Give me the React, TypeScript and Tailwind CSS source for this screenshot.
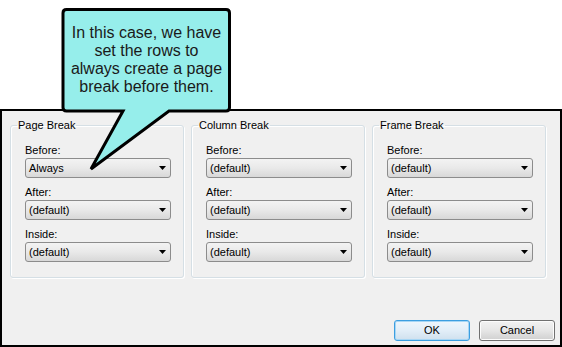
const FONT = { fontFamily: '"Liberation Sans", Arial, sans-serif' };

const GROUPS = [
  { title: "Page Break", values: ["Always", "(default)", "(default)"] },
  { title: "Column Break", values: ["(default)", "(default)", "(default)"] },
  { title: "Frame Break", values: ["(default)", "(default)", "(default)"] },
];

const LABELS = ["Before:", "After:", "Inside:"];

function Combo({ value }: { value: string }) {
  return (
    <div className="mt-[1px] flex h-[20px] items-center justify-between rounded-[3px] border border-[#8c8c8c] bg-gradient-to-b from-[#f3f3f3] via-[#e9e9e9] to-[#d8d8d8] pl-[3px] pr-[4px] text-[11px] leading-none text-black">
      <span>{value}</span>
      <svg width="7" height="4" viewBox="0 0 7 4">
        <path d="M0 0 H7 L3.5 4 Z" fill="#000" />
      </svg>
    </div>
  );
}

function Group({ title, values }: { title: string; values: string[] }) {
  return (
    <fieldset className="w-[174px] rounded-[3px] border border-[#d5dfe5] p-0 shadow-[inset_1px_1px_0_#fff,1px_1px_0_#fff]">
      <legend className="ml-[6px] px-[1px] text-[11px] leading-[14px] text-black">{title}</legend>
      <div className="pl-[14px] pr-[12px] pt-[11px] pb-[15px]">
        {LABELS.map((label, i) => (
          <div key={label} className={i > 0 ? "mt-[7px]" : ""}>
            <div className="h-[14px] text-[11px] leading-[14px] text-black">{label}</div>
            <Combo value={values[i]} />
          </div>
        ))}
      </div>
    </fieldset>
  );
}

function Button({ label, focused }: { label: string; focused?: boolean }) {
  return (
    <div
      className={
        focused
          ? "flex h-[21px] w-[76px] items-center justify-center rounded-[3px] border border-[#3c9ee0] bg-gradient-to-b from-[#eef6fc] via-[#e2eef8] to-[#cfe0ee] text-[11px] text-black shadow-[inset_0_0_0_1px_#a6d6f5]"
          : "flex h-[21px] w-[76px] items-center justify-center rounded-[3px] border border-[#707070] bg-gradient-to-b from-[#f2f2f2] via-[#e6e6e6] to-[#d0d0d0] text-[11px] text-black shadow-[inset_0_0_0_1px_#fcfcfc]"
      }
    >
      {label}
    </div>
  );
}

function Callout() {
  return (
    <div className="absolute left-0 top-0 h-[172px] w-[240px]">
      <svg width="240" height="172" className="absolute left-0 top-0">
        <path
          d="M66.5 9.5 H226 Q229.5 9.5 229.5 13 V107.5 Q229.5 111 226 111 H169 L91 169 L123 111 H66.5 Q63 111 63 107.5 V13 Q63 9.5 66.5 9.5 Z"
          fill="#96eeeb"
          stroke="#000"
          strokeWidth="3"
          strokeLinejoin="miter"
        />
      </svg>
      <div className="absolute left-[63px] top-[24px] w-[167px] text-center text-[16px] leading-[18px] text-[#1a1a1a]">
        In this case, we have
        <br />
        set the rows to
        <br />
        always create a page
        <br />
        break before them.
      </div>
    </div>
  );
}

export default function App() {
  return (
    <div className="relative h-[347px] w-[562px] bg-white" style={FONT}>
      <div className="pt-[109px]">
        <div className="flex h-[238px] w-[562px] flex-col border-2 border-black bg-[#f0f0f0]">
          <div className="mt-[7px] flex gap-[7px] pl-[8px]">
            {GROUPS.map((g) => (
              <Group key={g.title} title={g.title} values={g.values} />
            ))}
          </div>
          <div className="flex-1" />
          <div className="flex justify-end gap-[9px] pb-[4px] pr-[5px]">
            <Button label="OK" focused />
            <Button label="Cancel" />
          </div>
        </div>
      </div>
      <Callout />
    </div>
  );
}
